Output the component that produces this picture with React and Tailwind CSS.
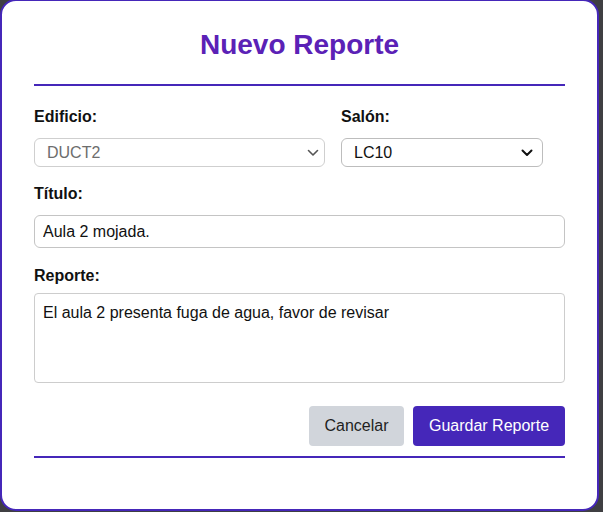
import React, { useState } from "react";

// Modal "Nuevo Reporte" sobre la página (fondo oscuro detrás).
function Chevron() {
  return (
    <svg width="12" height="8" viewBox="0 0 12 8" className="pointer-events-none absolute right-[10px] top-1/2 -translate-y-1/2">
      <path d="M1.5 1.5 L6 6 L10.5 1.5" fill="none" stroke="#111" strokeWidth="2" strokeLinecap="round" strokeLinejoin="round" />
    </svg>
  );
}

export default function App() {
  const [titulo, setTitulo] = useState("Aula 2 mojada.");
  const [reporte, setReporte] = useState("El aula 2 presenta fuga de agua, favor de revisar");
  const [salon, setSalon] = useState("LC10");

  return (
    <div className="w-[603px] h-[512px] bg-[#3f3f42] overflow-hidden font-['Liberation_Sans',Arial,sans-serif]">
      <div className="w-[599px] h-[512px] -mt-[1px] bg-white border-2 border-[#4527b9] rounded-2xl px-[32px] pt-[28px]">
        <h2 className="text-[28px] leading-[32px] font-bold text-center text-[#5b21b6]">Nuevo Reporte</h2>
        <div className="mt-[23px] h-[2px] bg-[#4527b9]" />

        <div className="mt-[19px] flex">
          <div className="w-[291px]">
            <label className="block text-[16px] leading-[24px] font-bold text-[#111]">Edificio:</label>
            <div className="relative mt-[9px]">
              <select disabled value="DUCT2" className="appearance-none w-full h-[29px] rounded-md border border-[#cfcfcf] bg-white pl-[12px] text-[16px] text-[#6d6d6d]">
                <option>DUCT2</option>
              </select>
              <svg width="12" height="8" viewBox="0 0 12 8" className="pointer-events-none absolute right-[6px] top-1/2 -translate-y-1/2">
                <path d="M1.5 1.5 L6 6 L10.5 1.5" fill="none" stroke="#555" strokeWidth="1.6" strokeLinecap="round" strokeLinejoin="round" />
              </svg>
            </div>
          </div>
          <div className="ml-[16px] w-[202px]">
            <label className="block text-[16px] leading-[24px] font-bold text-[#111]">Salón:</label>
            <div className="relative mt-[9px]">
              <select value={salon} onChange={(e) => setSalon(e.target.value)} className="appearance-none w-full h-[29px] rounded-md border border-[#bdbdbd] bg-white pl-[12px] text-[16px] text-[#111]">
                <option>LC10</option>
                <option>LC11</option>
              </select>
              <Chevron />
            </div>
          </div>
        </div>

        <label className="block mt-[15px] text-[16px] leading-[24px] font-bold text-[#111]">Título:</label>
        <input
          value={titulo}
          onChange={(e) => setTitulo(e.target.value)}
          className="mt-[9px] block w-full h-[33px] rounded-md border border-[#c4c4c4] px-[8px] text-[16px] text-[#111] outline-none"
        />

        <label className="block mt-[16px] text-[16px] leading-[24px] font-bold text-[#111]">Reporte:</label>
        <textarea
          value={reporte}
          onChange={(e) => setReporte(e.target.value)}
          className="mt-[5px] block w-full h-[90px] resize-none rounded-[4px] border border-[#cdcdcd] px-[8px] py-[9px] text-[16px] leading-[20px] text-[#111] outline-none"
        />

        <div className="mt-[23px] flex justify-end gap-[9px]">
          <button className="h-[40px] w-[95px] rounded-[4px] bg-[#d1d5db] text-[16px] text-[#1f1f1f]">Cancelar</button>
          <button className="h-[40px] w-[152px] rounded-[4px] bg-[#4527b9] text-[16px] text-white">Guardar Reporte</button>
        </div>
        <div className="mt-[10px] h-[2px] bg-[#4527b9]" />
      </div>
    </div>
  );
}
